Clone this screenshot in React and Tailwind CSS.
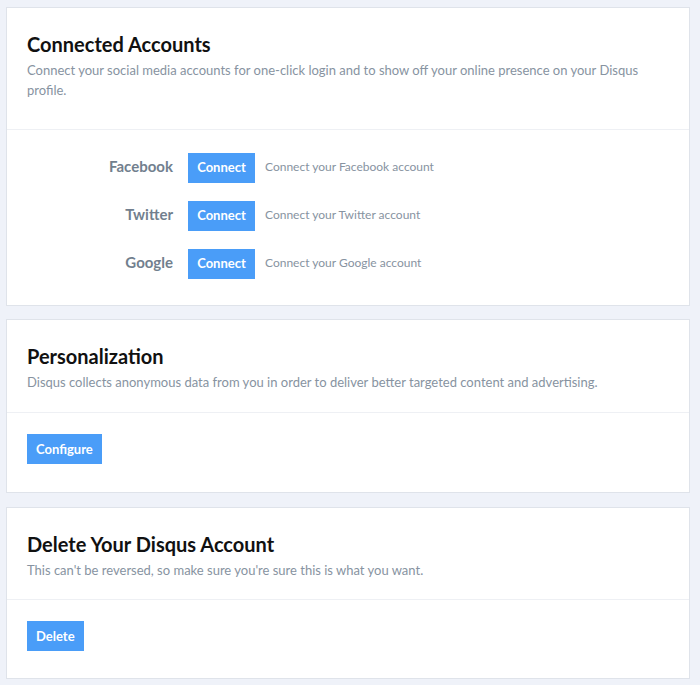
import React from "react";

const font = { fontFamily: "Lato, 'Noto Sans', sans-serif" };

function Btn({ children }) {
  return (
    <button className="h-[30px] bg-[#4a9df8] px-[9px] text-[13px] font-bold leading-[30px] text-white">
      {children}
    </button>
  );
}

function Row({ label, service }) {
  return (
    <div className="flex items-center">
      <div className="w-[146px] pb-[3px] text-right text-[15px] font-bold text-[#727f8e]">{label}</div>
      <div className="ml-[15px]">
        <button className="h-[30px] w-[67px] bg-[#4a9df8] text-[13px] font-bold text-white">Connect</button>
      </div>
      <div className="ml-[10px] pb-[2px] text-[12px] text-[#8793a1]">Connect your {service} account</div>
    </div>
  );
}

export default function App() {
  return (
    <div className="min-h-[685px] bg-[#eff2f9] px-[6px] pt-[7px] pb-[6px]" style={font}>
      <div className="w-[684px]">
        <div className="border border-[#dfe3ea] bg-white">
          <div className="border-b border-[#eef0f4] px-5 pt-[22px] pb-[29px]">
            <h2 className="text-[20px] font-bold leading-[28px] text-[#111]">Connected Accounts</h2>
            <p className="mt-[2px] text-[13px] leading-[20px] text-[#8793a1]">
              Connect your social media accounts for one-click login and to show off your online presence on your Disqus profile.
            </p>
          </div>
          <div className="flex flex-col gap-[18px] px-5 pt-[23px] pb-[26px]">
            <Row label="Facebook" service="Facebook" />
            <Row label="Twitter" service="Twitter" />
            <Row label="Google" service="Google" />
          </div>
        </div>

        <div className="mt-[13px] border border-[#dfe3ea] bg-white">
          <div className="border-b border-[#eef0f4] px-5 pt-[22px] pb-[20px]">
            <h2 className="text-[20px] font-bold leading-[28px] text-[#111]">Personalization</h2>
            <p className="mt-[2px] text-[13px] leading-[20px] text-[#8793a1]">
              Disqus collects anonymous data from you in order to deliver better targeted content and advertising.
            </p>
          </div>
          <div className="px-5 pt-[21px] pb-[28px]">
            <Btn>Configure</Btn>
          </div>
        </div>

        <div className="mt-[14px] border border-[#dfe3ea] bg-white">
          <div className="border-b border-[#eef0f4] px-5 pt-[22px] pb-[19px]">
            <h2 className="text-[20px] font-bold leading-[28px] text-[#111]">Delete Your Disqus Account</h2>
            <p className="mt-[2px] text-[13px] leading-[20px] text-[#8793a1]">
              This can't be reversed, so make sure you're sure this is what you want.
            </p>
          </div>
          <div className="px-5 pt-[21px] pb-[27px]">
            <Btn>Delete</Btn>
          </div>
        </div>
      </div>
    </div>
  );
}
